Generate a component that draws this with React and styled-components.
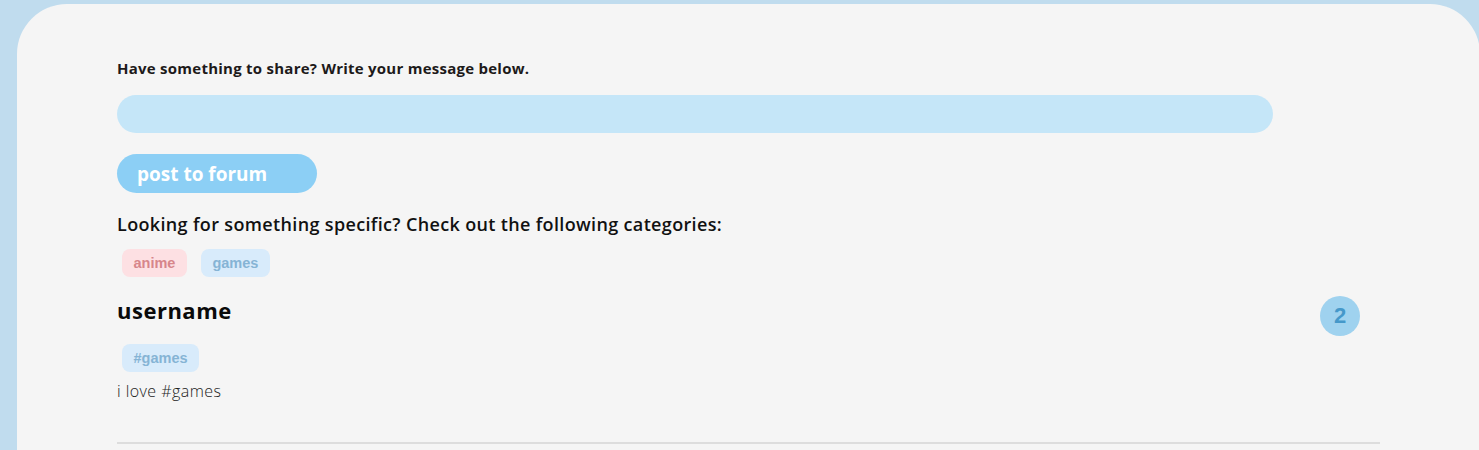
import React from "react";
import styled, { createGlobalStyle } from "styled-components";

const Global = createGlobalStyle`
  html, body { margin: 0; padding: 0; }
  body {
    background: #c0dcee;
    overflow: hidden;
    font-family: "Open Sans", "Lato", sans-serif;
    color: #111;
  }
`;

const Page = styled.div`
  padding: 4px 0 0 17px;
  width: 1479px;
  height: 450px;
  box-sizing: border-box;
  overflow: hidden;
`;

const Card = styled.main`
  width: 1463px;
  min-height: 460px;
  box-sizing: border-box;
  background: #f5f5f5;
  border-radius: 50px 50px 0 0;
  padding: 55px 100px 0 100px;
`;

const Prompt = styled.p`
  margin: 0;
  font-size: 15px;
  font-weight: 700;
  line-height: 18px;
  color: #1d1a1a;
  letter-spacing: 0.25px;
`;

const MessageInput = styled.input`
  display: block;
  margin-top: 18px;
  width: 1156px;
  height: 38px;
  box-sizing: border-box;
  border: none;
  outline: none;
  border-radius: 19px;
  background: #c5e6f8;
  padding: 0 19px;
`;

const PostButton = styled.button`
  display: block;
  margin-top: 21px;
  width: 200px;
  height: 39px;
  border: none;
  border-radius: 20px;
  background: #8ccff5;
  color: #fff;
  font-family: "Open Sans", sans-serif;
  font-weight: 700;
  font-size: 19px;
  text-align: left;
  padding: 0 0 0 20px;
  letter-spacing: 0;
`;

const Heading = styled.h3`
  margin: 19px 0 0;
  font-size: 18px;
  font-weight: 600;
  line-height: 24px;
  color: #111;
  letter-spacing: 0.35px;
`;

const TagRow = styled.div`
  display: flex;
  gap: 14px;
  margin: 13px 0 0 5px;
`;

const Tag = styled.span`
  display: inline-flex;
  align-items: center;
  height: 28px;
  padding: 0 11.5px;
  border-radius: 8px;
  font-family: "Liberation Sans", "Inter", sans-serif;
  font-weight: 700;
  font-size: 14.5px;
  background: ${(p) => (p.$tone === "pink" ? "#fde0e3" : "#d8ebfb")};
  color: ${(p) => (p.$tone === "pink" ? "#d7868b" : "#86b4d5")};
`;

const Post = styled.article`
  margin-top: 19px;
  padding-bottom: 41px;
  border-bottom: 2px solid #dddddd;
`;

const PostHeader = styled.div`
  display: flex;
  align-items: flex-start;
  justify-content: space-between;
  padding-right: 20px;
`;

const Username = styled.h2`
  margin: 0;
  font-size: 22px;
  font-weight: 700;
  line-height: 28px;
  color: #0a0a0a;
  letter-spacing: 0.5px;
`;

const Count = styled.div`
  width: 40px;
  height: 40px;
  border-radius: 50%;
  background: #9fd2ef;
  color: #4598ca;
  font-family: "Liberation Sans", sans-serif;
  font-weight: 700;
  font-size: 22px;
  display: flex;
  align-items: center;
  justify-content: center;
`;

const PostTags = styled.div`
  display: flex;
  margin: 8px 0 0 5px;
`;

const Body = styled.p`
  margin: 9px 0 0;
  font-size: 16px;
  font-weight: 300;
  line-height: 20px;
  color: #1a1a1a;
  letter-spacing: 0.45px;
`;

export default function App() {
  return (
    <>
      <Global />
      <Page>
        <Card>
          <Prompt>Have something to share? Write your message below.</Prompt>
          <MessageInput aria-label="message" />
          <PostButton>post to forum</PostButton>
          <Heading>Looking for something specific? Check out the following categories:</Heading>
          <TagRow>
            <Tag $tone="pink">anime</Tag>
            <Tag $tone="blue">games</Tag>
          </TagRow>
          <Post>
            <PostHeader>
              <Username>username</Username>
              <Count>2</Count>
            </PostHeader>
            <PostTags>
              <Tag $tone="blue">#games</Tag>
            </PostTags>
            <Body>i love #games</Body>
          </Post>
        </Card>
      </Page>
    </>
  );
}
